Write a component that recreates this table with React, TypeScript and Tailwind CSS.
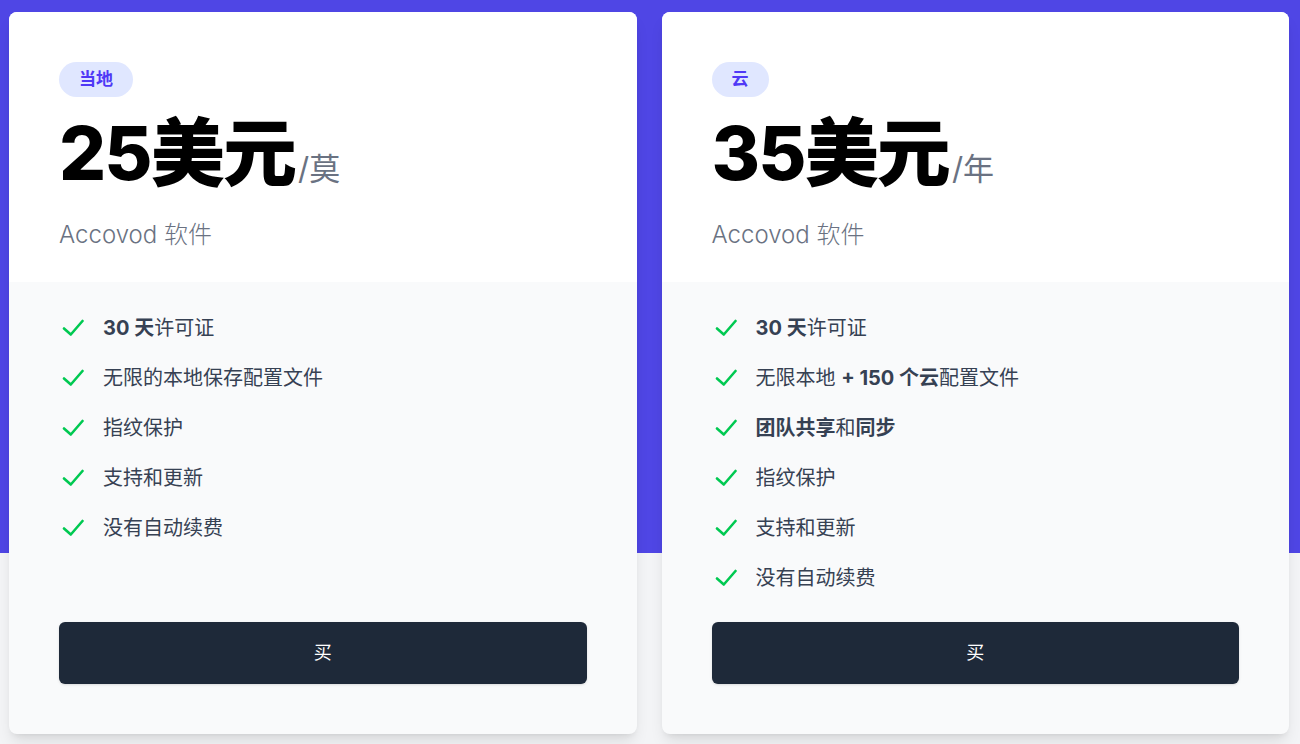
const plans = [
  {
    tag: "当地",
    price: "25美元",
    per: "/莫",
    features: [
      <><b className="font-bold">30 天</b>许可证</>,
      <>无限的本地保存配置文件</>,
      <>指纹保护</>,
      <>支持和更新</>,
      <>没有自动续费</>,
    ],
  },
  {
    tag: "云",
    price: "35美元",
    per: "/年",
    features: [
      <><b className="font-bold">30 天</b>许可证</>,
      <>无限本地 <b className="font-bold">+ 150 个云</b>配置文件</>,
      <><b className="font-bold">团队共享</b>和<b className="font-bold">同步</b></>,
      <>指纹保护</>,
      <>支持和更新</>,
      <>没有自动续费</>,
    ],
  },
];

function Check() {
  return (
    <svg width="22" height="17" viewBox="0 0 22 17" fill="none" className="shrink-0 text-green-500">
      <path d="M2 9.5l6.8 6L20.5 2" stroke="currentColor" strokeWidth="2.6" strokeLinecap="round" strokeLinejoin="round" />
    </svg>
  );
}

export default function App() {
  return (
    <div
      className="h-screen w-full overflow-hidden bg-[linear-gradient(to_bottom,#4f46e5_553px,#f3f4f6_553px)] pt-3 pl-[9px] pr-[11px]"
      style={{ fontFamily: 'Inter, "Noto Sans CJK SC", sans-serif' }}
    >
      <div className="grid grid-cols-2 gap-[25px] items-stretch">
        {plans.map((p) => (
          <div key={p.tag} className="flex flex-col rounded-lg overflow-hidden shadow-lg bg-gray-50">
            <div className="bg-white px-[50px] pt-[50px] pb-[31px]">
              <span className="inline-flex items-center h-[35px] px-[20px] rounded-full bg-indigo-100 text-indigo-600 text-[17px] font-bold">
                {p.tag}
              </span>
              <div className="mt-[19px] flex items-baseline">
                <span className="text-[74px] leading-none font-extrabold tracking-tight text-black">{p.price}</span>
                <span className="ml-[3px] text-[31px] font-normal text-gray-500">{p.per}</span>
              </div>
              <div className="mt-[26px] text-2xl leading-8 font-light text-gray-500">Accovod 软件</div>
            </div>
            <div className="flex-1 flex flex-col px-[50px] pt-[32px] pb-[50px]">
              <ul className="flex flex-col gap-[22px] mb-[30px]">
                {p.features.map((f, i) => (
                  <li key={i} className="flex items-center h-7">
                    <span className="ml-[3px] w-[41px]"><Check /></span>
                    <span className="text-xl leading-7 text-gray-700">{f}</span>
                  </li>
                ))}
              </ul>
              <button
                type="button"
                className="mt-auto h-[62px] w-full rounded-md bg-gray-800 text-white text-lg shadow"
              >
                买
              </button>
            </div>
          </div>
        ))}
      </div>
    </div>
  );
}
